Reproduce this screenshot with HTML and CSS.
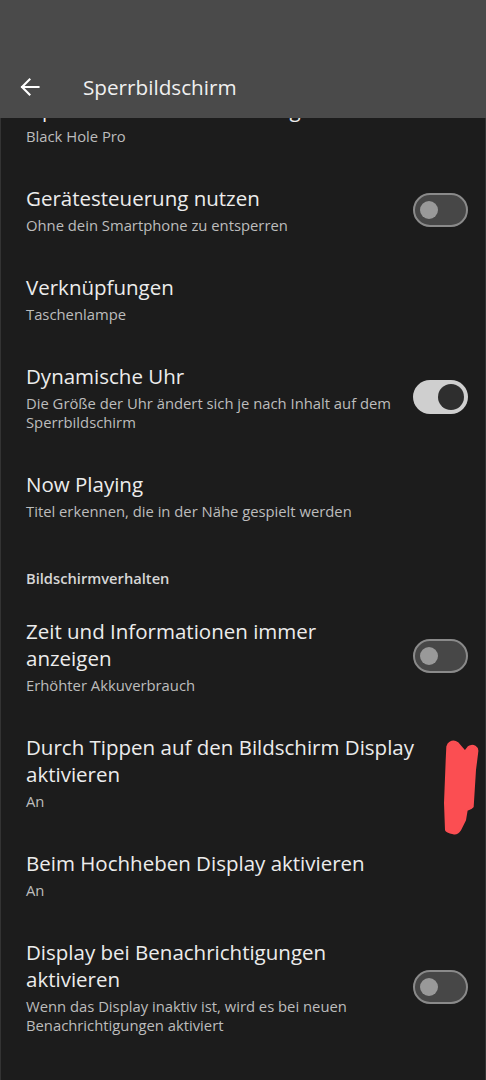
FILE: index.html
```html
<!DOCTYPE html>
<html lang="de">
<head>
<meta charset="utf-8">
<title>Sperrbildschirm</title>
<link rel="stylesheet" href="styles.css">
</head>
<body>
<div class="screen">
  <header class="appbar">
    <div class="appbar-row">
      <svg class="back" width="24" height="24" viewBox="0 0 24 24" aria-hidden="true">
        <path d="M20.5 12H4M11.5 4.5L4 12l7.5 7.5" fill="none" stroke="#ffffff" stroke-width="2.1" stroke-linecap="square" stroke-linejoin="miter"/>
      </svg>
      <h1 class="appbar-title">Sperrbildschirm</h1>
    </div>
  </header>
  <div class="viewport">
    <div class="list">
      <div class="row">
        <div class="text">
          <div class="title">Optionen zur Uhrdarstellung</div>
          <div class="sub">Black Hole Pro</div>
        </div>
      </div>
      <div class="row">
        <div class="text">
          <div class="title">Gerätesteuerung nutzen</div>
          <div class="sub">Ohne dein Smartphone zu entsperren</div>
        </div>
        <div class="switch off"><span class="knob"></span></div>
      </div>
      <div class="row">
        <div class="text">
          <div class="title">Verknüpfungen</div>
          <div class="sub">Taschenlampe</div>
        </div>
      </div>
      <div class="row">
        <div class="text">
          <div class="title">Dynamische Uhr</div>
          <div class="sub">Die Größe der Uhr ändert sich je nach Inhalt auf dem Sperrbildschirm</div>
        </div>
        <div class="switch on"><span class="knob"></span></div>
      </div>
      <div class="row">
        <div class="text">
          <div class="title">Now Playing</div>
          <div class="sub">Titel erkennen, die in der Nähe gespielt werden</div>
        </div>
      </div>
      <div class="section">Bildschirmverhalten</div>
      <div class="row">
        <div class="text">
          <div class="title">Zeit und Informationen immer anzeigen</div>
          <div class="sub">Erhöhter Akkuverbrauch</div>
        </div>
        <div class="switch off"><span class="knob"></span></div>
      </div>
      <div class="row">
        <div class="text">
          <div class="title">Durch Tippen auf den Bildschirm Display aktivieren</div>
          <div class="sub">An</div>
        </div>
      </div>
      <div class="row">
        <div class="text">
          <div class="title">Beim Hochheben Display aktivieren</div>
          <div class="sub">An</div>
        </div>
      </div>
      <div class="row">
        <div class="text">
          <div class="title">Display bei Benachrichtigungen aktivieren</div>
          <div class="sub">Wenn das Display inaktiv ist, wird es bei neuen Benachrichtigungen aktiviert</div>
        </div>
        <div class="switch off"><span class="knob"></span></div>
      </div>
    </div>
  </div>
  <svg class="scribble" width="42" height="100" viewBox="0 0 42 100" aria-hidden="true">
    <path d="M10 4.7 C12 3.5 15 3.2 17.5 5 L20.7 8.7 L25 13.7 L28.3 9.3 C30 7.5 33 7.5 35 8.7 C37 10 37.6 12 37.3 13.7 L35 32 L32.7 68.7 C31 71 28.5 71.5 26.7 72 L25 82 L20 92 C18 95 15.5 95.8 13.3 95.3 C9 94.5 6.3 93 6 92 L5 65 L6.7 22 L7.3 8.7 C8 6 9 5.2 10 4.7 Z" fill="#fb4e52" stroke="#fb4e52" stroke-width="2" stroke-linejoin="round"/>
  </svg>
</div>
</body>
</html>
```
FILE: styles.css
```css
html, body {
  margin: 0;
  padding: 0;
  background: #1c1c1c;
}

.screen {
  position: relative;
  width: 486px;
  height: 1080px;
  overflow: hidden;
  display: flex;
  flex-direction: column;
  background: #1c1c1c;
  font-family: "Open Sans", Roboto, "Liberation Sans", sans-serif;
}

.screen::after {
  content: "";
  position: absolute;
  inset: 0;
  border-left: 1px solid #333333;
  border-right: 1px solid #333333;
  pointer-events: none;
}

.appbar {
  flex: none;
  height: 118px;
  box-sizing: border-box;
  padding-top: 59px;
  background: #4a4a4a;
  position: relative;
  z-index: 1;
}

.appbar-row {
  height: 56px;
  display: flex;
  align-items: center;
  padding-left: 18px;
}

.back {
  flex: none;
  display: block;
}

.appbar-title {
  margin: 0 0 0 41px;
  font-size: 20.7px;
  font-weight: 400;
  color: #f0f0f0;
  line-height: 28px;
}

.viewport {
  flex: 1;
  overflow: hidden;
}

.list {
  margin-top: -41.5px;
}

.row {
  display: flex;
  align-items: center;
  padding: 19px 18px 20px 26px;
}

.text {
  flex: 1;
  min-width: 0;
}

.title {
  font-size: 20.5px;
  line-height: 27px;
  color: #ececec;
}

.sub {
  margin-top: 4px;
  font-size: 14.8px;
  line-height: 19px;
  color: #bdbdbd;
}

.section {
  padding: 27.5px 26px 10.5px;
  font-size: 14.7px;
  line-height: 20px;
  font-weight: 600;
  color: #d6d6d6;
}

.switch {
  flex: none;
  width: 55px;
  height: 34px;
  margin-left: 14px;
  border-radius: 17px;
  box-sizing: border-box;
  display: flex;
  align-items: center;
}

.switch.off {
  background: #474747;
  border: 2px solid #8a8a8a;
  padding-left: 5px;
}

.switch.off .knob {
  width: 18px;
  height: 18px;
  border-radius: 50%;
  background: #999999;
}

.switch.on {
  background: #cfcfcf;
  justify-content: flex-end;
  padding-right: 4px;
}

.switch.on .knob {
  width: 26px;
  height: 26px;
  border-radius: 50%;
  background: #2e2e2e;
}

.scribble {
  position: absolute;
  left: 440px;
  top: 738px;
}
```
